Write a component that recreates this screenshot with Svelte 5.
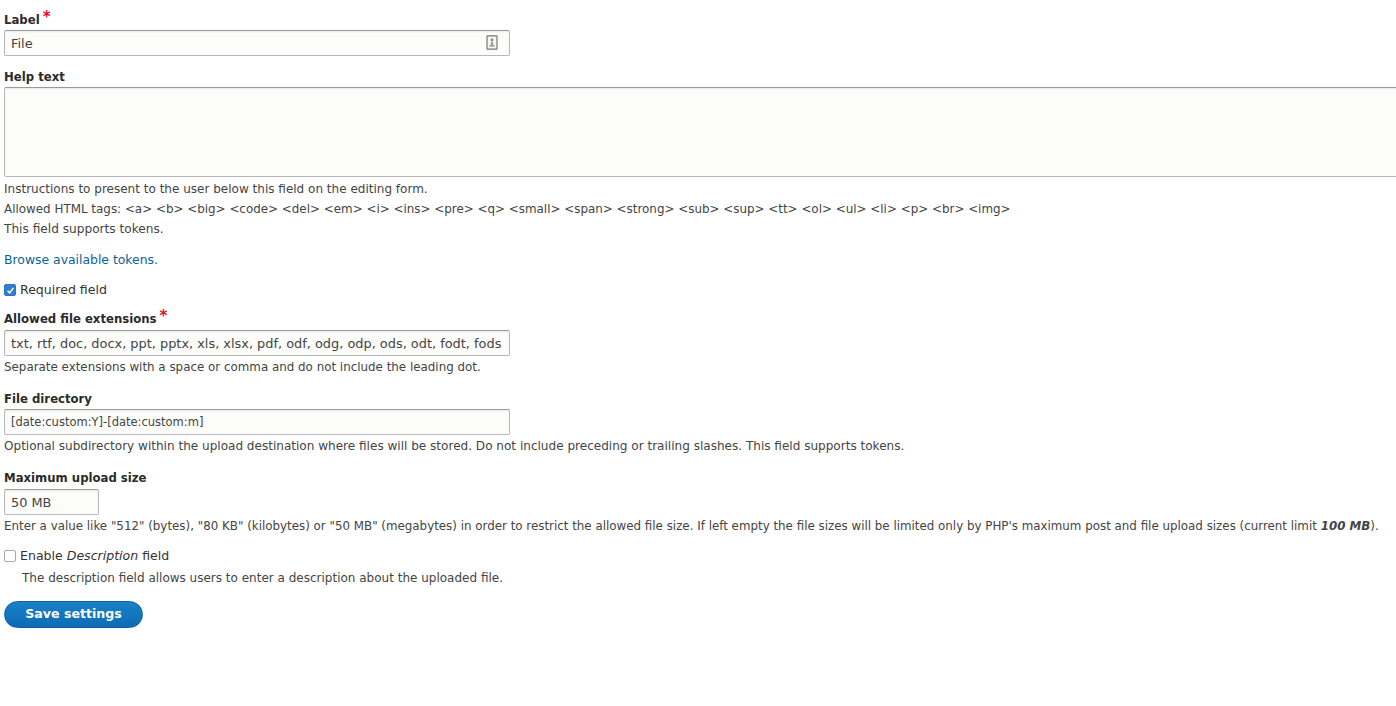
<script>
  const tags = "<a> <b> <big> <code> <del> <em> <i> <ins> <pre> <q> <small> <span> <strong> <sub> <sup> <tt> <ol> <ul> <li> <p> <br> <img>";
</script>

<form class="form">
  <div class="field f-label">
    <label class="lbl" for="l">Label <span class="req">*</span></label>
    <div class="inputwrap">
      <input id="l" class="text wide" value="File" />
      <svg class="ctx" width="12" height="15" viewBox="0 0 12 15" aria-hidden="true">
        <rect x="1" y="0.8" width="10" height="13.4" rx="0.5" fill="#f4f4f2" stroke="#777" stroke-width="1.2"/>
        <circle cx="6" cy="5" r="1.4" fill="#888"/>
        <path d="M3.5 10h5v1.4h-5z M5 7h2v3h-2z" fill="#999"/>
      </svg>
    </div>
  </div>

  <div class="field f-help">
    <label class="lbl tight" for="h">Help text</label>
    <textarea id="h" class="area"></textarea>
    <div class="desc">
      <div class="w-inst">Instructions to present to the user below this field on the editing form.</div>
      <div class="w-tags">Allowed HTML tags: {tags}</div>
      <div class="w-tok">This field supports tokens.</div>
    </div>
  </div>

  <a class="browse" href="#tokens">Browse available tokens.</a>

  <label class="check f-req">
    <span class="box on">
      <svg width="9" height="9" viewBox="0 0 9 9" aria-hidden="true"><path d="M1.6 4.8 3.6 6.9 7.4 1.9" fill="none" stroke="#fff" stroke-width="1.5"/></svg>
    </span>
    Required field
  </label>

  <div class="field f-ext">
    <label class="lbl" for="e">Allowed file extensions <span class="req">*</span></label>
    <input id="e" class="text wide" value="txt, rtf, doc, docx, ppt, pptx, xls, xlsx, pdf, odf, odg, odp, ods, odt, fodt, fods" />
    <div class="desc one w-sep">Separate extensions with a space or comma and do not include the leading dot.</div>
  </div>

  <div class="field f-dir">
    <label class="lbl tight" for="d">File directory</label>
    <input id="d" class="text wide date" value="[date:custom:Y]-[date:custom:m]" />
    <div class="desc one w-opt">Optional subdirectory within the upload destination where files will be stored. Do not include preceding or trailing slashes. This field supports tokens.</div>
  </div>

  <div class="field f-max">
    <label class="lbl" for="m">Maximum upload size</label>
    <input id="m" class="text small" value="50 MB" />
    <div class="desc one w-ent">Enter a value like "512" (bytes), "80 KB" (kilobytes) or "50 MB" (megabytes) in order to restrict the allowed file size. If left empty the file sizes will be limited only by PHP's maximum post and file upload sizes (current limit <em><b>100 MB</b></em>).</div>
  </div>

  <label class="check f-en">
    <span class="box"></span>
    <span>Enable <em>Description</em> field</span>
  </label>
  <div class="desc sub">The description field allows users to enter a description about the uploaded file.</div>

  <button type="button" class="save">Save settings</button>
</form>

<style>
  :global(body) {
    margin: 0;
    background: #fff;
    overflow: hidden;
  }
  .form {
    height: 706px;
    overflow: hidden;
    padding: 0 0 0 4px;
    box-sizing: border-box;
    font-family: "DejaVu Sans", sans-serif;
    font-size: 12px;
    line-height: 20px;
    color: #333;
  }
  .field { display: block; }
  .lbl {
    display: block;
    width: max-content;
    font-weight: 700;
    font-size: 11.7px;
    color: #2b2b2b;
    line-height: 16px;
    margin-bottom: 3px;
  }
  .lbl.tight { margin-bottom: 2px; }
  .req { color: #e00c2c; font-size: 15px; line-height: 10px; position: relative; top: -2px; left: -1px; }
  .f-label { padding-top: 12px; }
  .f-label .lbl { margin-bottom: 2px; }
  .f-help { margin-top: 13px; }
  .f-ext { margin-top: 11px; }
  .f-dir { margin-top: 14px; }
  .f-max { margin-top: 14px; }
  .inputwrap { position: relative; width: 506px; }
  .ctx { position: absolute; right: 12px; top: 5px; }
  .text {
    display: block;
    box-sizing: border-box;
    height: 26px;
    border: 1px solid #b8b8b8;
    border-top-color: #999;
    border-radius: 2px;
    background: #fcfcfa;
    box-shadow: inset 0 1px 2px rgba(0,0,0,.08);
    padding: 0 6px;
    font-family: inherit;
    font-size: 12.9px;
    color: #444;
    outline: none;
  }
  .date { font-size: 11.5px; }
  .wide { width: 506px; }
  .small { width: 95px; }
  .area {
    display: block;
    box-sizing: border-box;
    width: 1400px;
    height: 90px;
    border: 1px solid #b8b8b8;
    border-top-color: #999;
    border-radius: 2px;
    background: #fcfcfa;
    resize: none;
    outline: none;
    box-shadow: inset 0 1px 2px rgba(0,0,0,.08);
  }
  .desc { color: #444; margin-top: 2px; white-space: nowrap; }
  .desc.one { margin-top: 1px; }
  .w-inst { font-size: 12.03px; }
  .w-tags { font-size: 11.92px; }
  .w-tok { font-size: 12.15px; }
  .w-sep { font-size: 11.88px; }
  .w-opt { font-size: 12.05px; }
  .w-ent { font-size: 11.87px; }
  .browse {
    display: block;
    width: max-content;
    margin-top: 11px;
    font-size: 12.4px;
    color: #0a6398;
    text-decoration: none;
  }
  .check {
    display: flex;
    align-items: center;
    gap: 4px;
    font-size: 12.55px;
    color: #333;
  }
  .f-req { margin-top: 10px; }
  .f-en { margin-top: 10px; }
  .box {
    box-sizing: border-box;
    width: 12px;
    height: 12px;
    border: 1px solid #aaa;
    border-radius: 2px;
    background: #fff;
    display: flex;
    align-items: center;
    justify-content: center;
    flex: none;
  }
  .box.on { background: #2f7fd0; border-color: #2a74c0; }
  .sub { margin-top: 2px; margin-left: 18px; }
  .save {
    display: block;
    margin-top: 13px;
    width: 139px;
    height: 27px;
    box-sizing: border-box;
    border: 1px solid #0f5fa0;
    border-radius: 14px;
    background: linear-gradient(#1a80c8, #0b6cb4);
    color: #fff;
    font: 700 12.6px/1 "DejaVu Sans", sans-serif;
    padding: 0;
  }
</style>
